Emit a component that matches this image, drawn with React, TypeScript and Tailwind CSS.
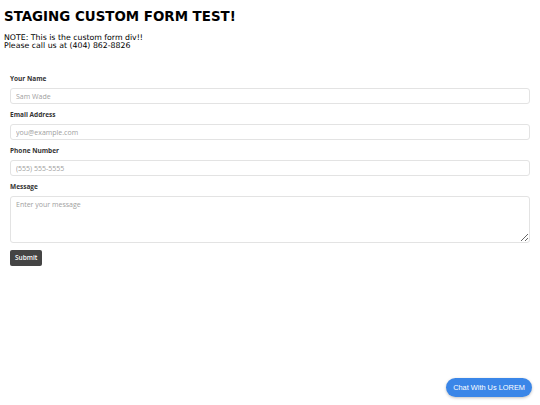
export default function App() {
  const input =
    "block h-4 w-full rounded-[3px] border border-[#e3e3e3] bg-white px-[5px] text-[7px] text-[#555] placeholder:text-[#a0a0a0] outline-none";
  const label = "mb-[5px] block text-[6.5px] font-bold leading-[8px] text-[#333]";
  return (
    <div className="relative h-[405px] w-[540px] bg-white">
      <div className="px-1 pt-[8px] font-['DejaVu_Sans',Verdana,sans-serif]">
        <h1 className="text-[13.4px] font-bold leading-[18px] text-black">STAGING CUSTOM FORM TEST!</h1>
        <p className="mt-[8px] text-[7.8px] leading-[8px] text-black">
          NOTE: This is the custom form div!!
          <br />
          Please call us at (404) 862-8826
        </p>
      </div>
      <form className="mt-[25px] flex flex-col px-[10px] font-['Open_Sans',sans-serif]">
        <label className={label}>Your Name</label>
        <input className={input} placeholder="Sam Wade" />
        <label className={`${label} mt-[7px]`}>Email Address</label>
        <input className={input} placeholder="you@example.com" />
        <label className={`${label} mt-[7px]`}>Phone Number</label>
        <input className={input} placeholder="(555) 555-5555" />
        <label className={`${label} mt-[7px]`}>Message</label>
        <textarea
          className="block h-[47px] w-full rounded-[3px] border border-[#e3e3e3] bg-white px-[5px] py-[3px] text-[7px] text-[#555] placeholder:text-[#a0a0a0] outline-none"
          placeholder="Enter your message"
        />
        <div className="mt-[7px] flex">
          <button
            type="button"
            className="h-4 rounded-[2px] bg-[#444] px-[5px] text-[6.5px] font-semibold text-white"
          >
            Submit
          </button>
        </div>
      </form>
      <button
        type="button"
        className="absolute bottom-[8px] right-[8px] h-[19px] rounded-full bg-[#3a86e8] px-[7px] font-['Liberation_Sans',Arial,sans-serif] text-[7.4px] text-white shadow-[0_1px_3px_rgba(0,0,0,0.25)]"
      >
        Chat With Us LOREM
      </button>
    </div>
  );
}
